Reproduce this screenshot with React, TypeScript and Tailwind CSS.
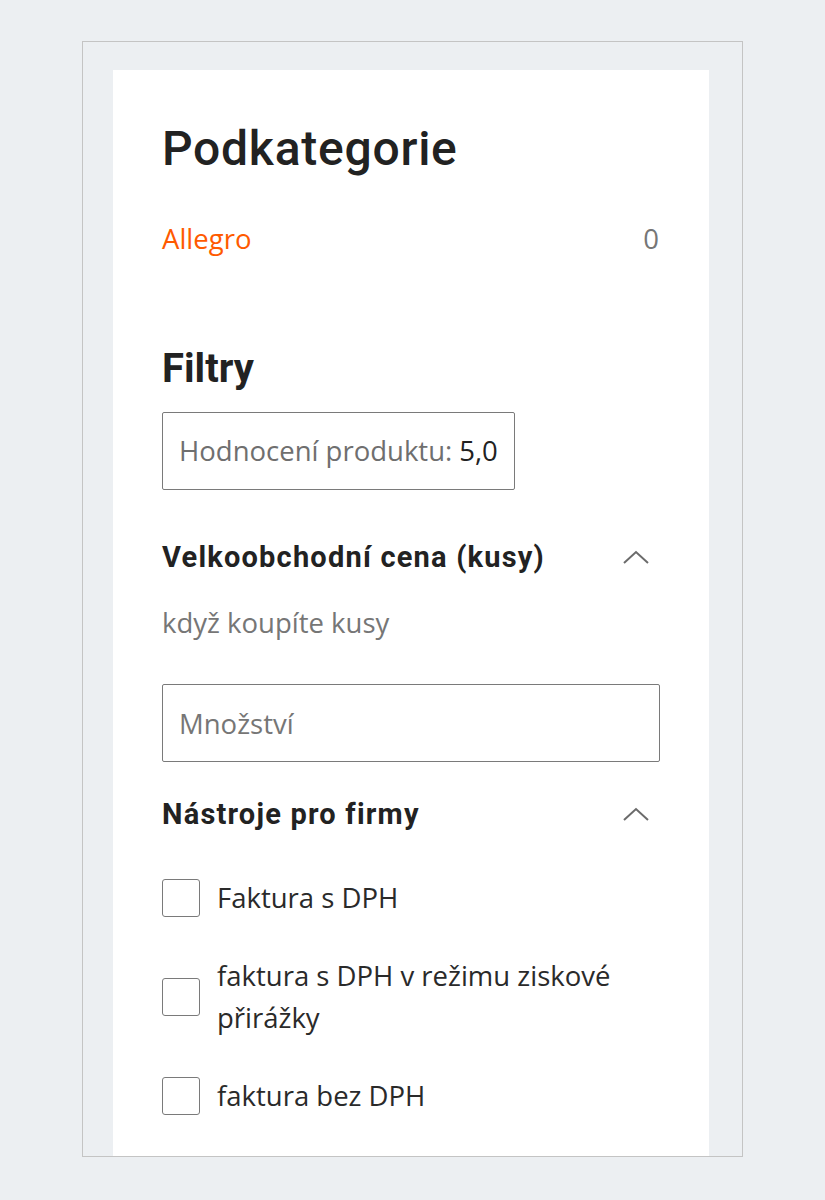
import React from 'react';

const heading = "font-['Roboto',sans-serif] text-[#222]";
const body = "font-['Open_Sans',sans-serif]";

function Chevron() {
  return (
    <svg width="28" height="16" viewBox="0 0 28 16" fill="none" className="mr-[10px]">
      <path d="M2 14 L14 3 L26 14" stroke="#6b6b6b" strokeWidth="2" />
    </svg>
  );
}

function SectionHeader({ title, className = '' }: { title: string; className?: string }) {
  return (
    <div className={`flex items-center justify-between ${className}`}>
      <h3 className={`${heading} text-[29px] leading-[36px] font-bold tracking-[1.2px]`}>{title}</h3>
      <Chevron />
    </div>
  );
}

function CheckRow({ label }: { label: string }) {
  return (
    <label className="flex items-center gap-[17px]">
      <span className="w-[38px] h-[38px] shrink-0 border-[1.5px] border-[#7a7a7a] rounded-[3px] bg-white" />
      <span className={`${body} text-[27.5px] leading-[42px] text-[#2a2a2a]`}>{label}</span>
    </label>
  );
}

export default function App() {
  const tools = ['Faktura s DPH', 'faktura s DPH v režimu ziskové přirážky', 'faktura bez DPH'];

  return (
    <div className="min-h-[1200px] bg-[#eceff2] pt-[41px] pl-[82px]">
      <div className="w-[661px] border border-[#c4c4c4] pl-[30px] pt-[28px]">
        <div className="w-[596px] bg-white pt-[51px] pb-[39px] px-[49px]">
          <h1 className={`${heading} text-[48px] leading-[56px] font-medium tracking-[0.75px]`}>Podkategorie</h1>

          <div className={`${body} mt-[44px] flex justify-between text-[27.5px] leading-[36px]`}>
            <span className="text-[#ff5a00]">Allegro</span>
            <span className="text-[#767676] mr-[1px]">0</span>
          </div>

          <h2 className={`${heading} mt-[88px] text-[40px] leading-[48px] font-bold`}>Filtry</h2>

          <div className={`${body} mt-[19px] inline-flex items-center h-[78px] px-[16px] border-[1.5px] border-[#7a7a7a] rounded-[2px] text-[27.5px]`}>
            <span className="text-[#6f6f6f]">Hodnocení produktu:</span>
            <span className="ml-[7px] text-[#222]">5,0</span>
          </div>

          <SectionHeader title="Velkoobchodní cena (kusy)" className="mt-[49px]" />

          <p className={`${body} mt-[30px] text-[27.5px] leading-[36px] text-[#767676]`}>když koupíte kusy</p>

          <input
            type="text"
            placeholder="Množství"
            className={`${body} mt-[43px] block w-full h-[78px] px-[16px] border-[1.5px] border-[#7a7a7a] rounded-[2px] text-[27.5px] text-[#222] placeholder:text-[#767676] outline-none`}
          />

          <SectionHeader title="Nástroje pro firmy" className="mt-[34px]" />

          <div className="mt-[45px] flex flex-col gap-[36px]">
            {tools.map(t => <CheckRow key={t} label={t} />)}
          </div>
        </div>
      </div>
    </div>
  );
}
